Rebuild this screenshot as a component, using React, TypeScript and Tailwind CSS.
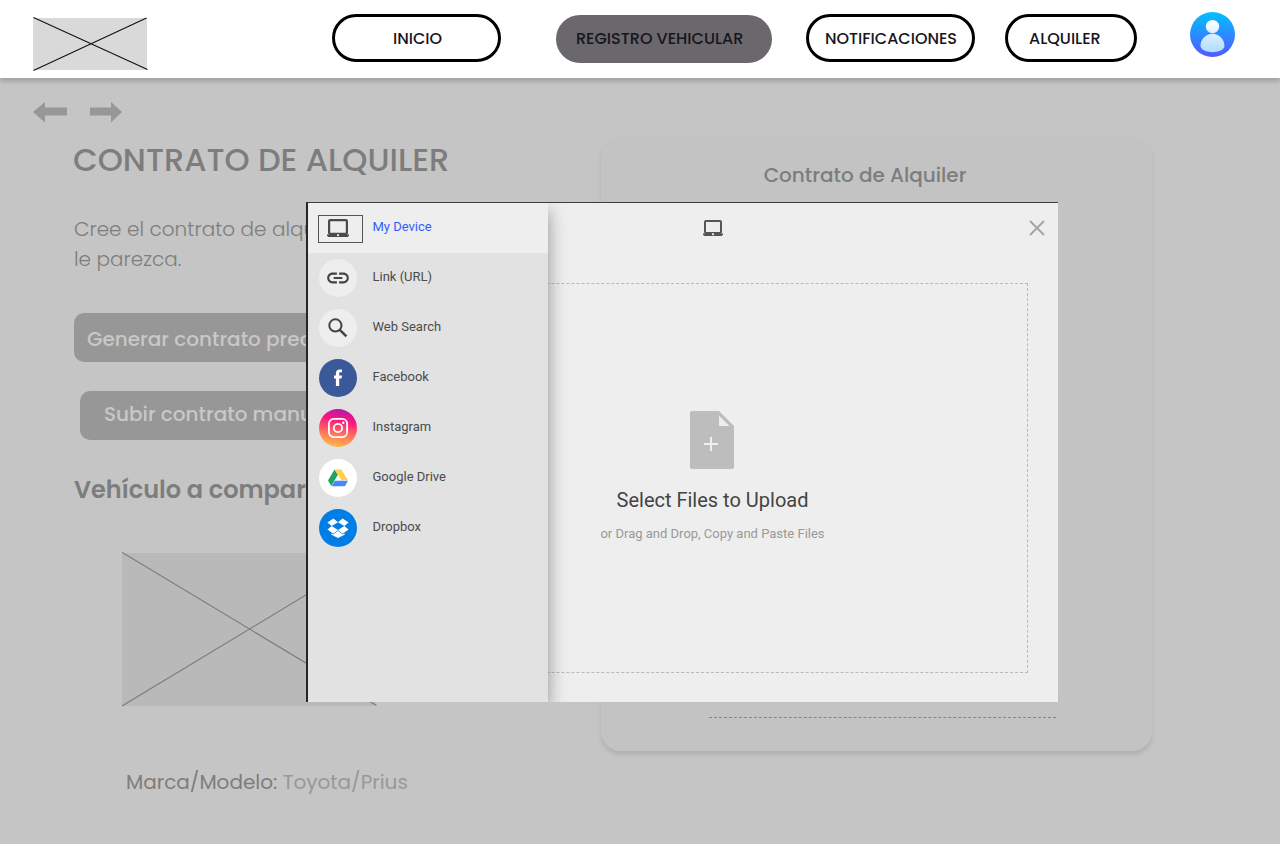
import type { ReactNode } from "react";

const LaptopIcon = ({ w, h, sw, color }: { w: number; h: number; sw: number; color: string }) => (
  <svg width={w} height={h} viewBox={`0 0 ${w} ${h}`} fill="none">
    <rect x={1 + sw / 2} y={sw / 2} width={w - 2 - sw} height={h - 2 - sw} rx="1" stroke={color} strokeWidth={sw} />
    <path d={`M0 ${h - 2.4}H${w}V${h - 1.5}L${w - 1.2} ${h}H1.2L0 ${h - 1.5}Z`} fill={color} />
    <rect x={w / 2 - 1} y={h - 2.7} width="2" height="1.8" fill="#eeeeee" />
  </svg>
);

const LinkIcon = () => (
  <svg width="26" height="26" viewBox="0 0 24 24" fill="#444444">
    <path d="M3.9 12c0-1.71 1.39-3.1 3.1-3.1h4V7H7c-2.76 0-5 2.24-5 5s2.24 5 5 5h4v-1.9H7c-1.71 0-3.1-1.39-3.1-3.1zM8 13h8v-2H8v2zm9-6h-4v1.9h4c1.71 0 3.1 1.39 3.1 3.1s-1.39 3.1-3.1 3.1h-4V17h4c2.76 0 5-2.24 5-5s-2.24-5-5-5z" />
  </svg>
);

const SearchIcon = () => (
  <svg width="20" height="20" viewBox="0 0 20 20" fill="none" stroke="#444444">
    <circle cx="7.4" cy="7.4" r="6.1" strokeWidth="2" />
    <path d="M11.8 11.8l6.6 6.6" strokeWidth="2.5" />
  </svg>
);

const FacebookIcon = () => (
  <svg width="8" height="17" viewBox="0 0 8 17" fill="#fff" className="-translate-y-px">
    <path d="M1.9 17V9.4H0V6.5h1.9V4.3C1.9 1.9 3.1.5 5.6.5H8v2.8H6.5c-1.1 0-1.3.5-1.3 1.3v1.9H8l-.4 2.9H5.2V17z" />
  </svg>
);

const InstagramIcon = () => (
  <svg width="20" height="20" viewBox="0 0 20 20" fill="none" stroke="#fff" strokeWidth="1.8">
    <rect x=".9" y=".9" width="18.2" height="18.2" rx="4.8" />
    <circle cx="10" cy="10" r="4.2" />
    <circle cx="15.3" cy="4.7" r="1.2" fill="#fff" stroke="none" />
  </svg>
);

const DriveIcon = () => (
  <svg width="20" height="18" viewBox="0 0 19 18" preserveAspectRatio="none">
    <path d="M6.2.4l3.2 5.4-6.3 11.3L0 11.6z" fill="#1da362" />
    <path d="M6.3.4h6.5L19 11.2h-6.3z" fill="#ffd04b" />
    <path d="M6.5 11.8H19L16 17.3H3.4z" fill="#4688f4" />
  </svg>
);

const DropboxIcon = () => (
  <svg width="22" height="20" viewBox="0 0 22 20" fill="#fff">
    <path d="M6.4.5L11 4.2 4.7 8 .4 4.6zM.4 11.6L4.7 8.1 11 12l-4.6 3.7zM11 12l6.3-3.9 4.3 3.5-6 4.1zM21.6 4.6L17.3 8 11 4.2 15.6.5zM11 12.8l4.6 3.8 2-1.3v1.5L11 20l-6.6-3.2v-1.5l2 1.3z" />
  </svg>
);

type Source = { label: string; icon: ReactNode; bg: string };

const sources: Source[] = [
  { label: "Link (URL)", icon: <LinkIcon />, bg: "bg-[#eeeeee]" },
  { label: "Web Search", icon: <SearchIcon />, bg: "bg-[#eeeeee]" },
  { label: "Facebook", icon: <FacebookIcon />, bg: "bg-[#3b5998]" },
  { label: "Instagram", icon: <InstagramIcon />, bg: "bg-[linear-gradient(10deg,#ffc83d_0%,#ff6f61_38%,#ff1580_68%,#a31aad_98%)]" },
  { label: "Google Drive", icon: <DriveIcon />, bg: "bg-white" },
  { label: "Dropbox", icon: <DropboxIcon />, bg: "bg-[#007ee5]" },
];

function Header() {
  return (
    <header className="relative flex h-[78px] items-start bg-white pl-[33px] text-[16px] font-medium text-[#17151c] shadow-[0_4px_4px_rgba(0,0,0,0.16)]">
      <svg className="mt-[17px] shrink-0" width="115" height="54" viewBox="0 0 115 54">
        <rect y="1" width="114" height="52" fill="#d9d9d9" />
        <path d="M.5 .5L114.5 52.5M.5 53.5L113.5 1" stroke="#111" strokeWidth="1.1" />
      </svg>
      <nav className="ml-[184px] flex items-start">
        <button className="mt-[14px] h-12 w-[169px] rounded-[24px] border-[3px] border-black pl-[58px] text-left leading-[43px] whitespace-nowrap">INICIO</button>
        <button className="mt-[15px] ml-[55px] h-12 w-[216px] rounded-[24px] bg-[#6a676d] pl-5 text-left leading-12 whitespace-nowrap">REGISTRO VEHICULAR</button>
        <button className="mt-[14px] ml-[34px] h-12 w-[169px] rounded-[24px] border-[3px] border-black pl-4 text-left leading-[43px] whitespace-nowrap">NOTIFICACIONES</button>
        <button className="mt-[14px] ml-[30px] h-12 w-[132px] rounded-[24px] border-[3px] border-black pl-[21px] text-left leading-[43px] whitespace-nowrap">ALQUILER</button>
      </nav>
      <svg className="mt-3 ml-[53px]" width="45" height="45" viewBox="0 0 45 45">
        <defs>
          <linearGradient id="avatar" x1="0" y1="0" x2="0" y2="1">
            <stop stopColor="#00c0ff" />
            <stop offset="1" stopColor="#5558ff" />
          </linearGradient>
          <linearGradient id="person" x1="0" y1="0" x2="0" y2="1">
            <stop stopColor="#ffffff" />
            <stop offset="1" stopColor="#addcff" />
          </linearGradient>
        </defs>
        <circle cx="22.5" cy="22.5" r="22.5" fill="url(#avatar)" />
        <path d="M29.2 14.6a6.7 6.7 0 1 1-13.4 0 6.7 6.7 0 0 1 13.4 0zM22.5 21.7c-6.8 0-12 6-12 11.9 0 4.7 6.4 6.6 12 6.6s12-1.9 12-6.6C34.5 27.7 29.3 21.7 22.5 21.7z" fill="url(#person)" />
      </svg>
    </header>
  );
}

function ContractPage() {
  return (
    <main className="flex h-[766px] items-start text-[#7d7d7d]">
      <section className="w-[600px] shrink-0 pt-6 pl-[33px]">
        <svg width="90" height="21" viewBox="0 0 90 21" fill="#979797">
          <path d="M0 10L12 0v5.5h22v8H12v7zM57 5.5h21V0l11 10-11 10.5v-7H57z" />
        </svg>
        <div className="pl-[41px]">
          <h1 className="mt-[13px] -ml-px h-12 text-[32px] leading-[48px] font-medium whitespace-nowrap">CONTRATO DE ALQUILER</h1>
          <p className="mt-[30px] text-[20px] leading-[30px] font-light">Cree el contrato de alquiler<br />le parezca.</p>
          <button className="mt-[39px] block h-[49px] w-[290px] overflow-hidden rounded-[10px] bg-[#979797] pt-[3px] pl-[13px] text-left text-[20px] font-medium whitespace-nowrap text-[#c8c8c8]">Generar contrato predet</button>
          <button className="mt-[29px] ml-1.5 block h-[49px] w-[278px] rounded-[10px] bg-[#979797] pb-[3px] pl-6 text-left text-[20px] font-medium whitespace-nowrap text-[#c8c8c8]">Subir contrato manual</button>
          <h2 className="mt-[32px] h-9 text-[24px] leading-9 font-semibold">Vehículo a comparar</h2>
          <svg className="mt-[44px] ml-12 block" width="255" height="155" viewBox="0 0 255 155">
            <rect y="1" width="254" height="153" fill="#b9b9b9" />
            <path d="M0 .3L254.5 153.5M0 154L254.5 .3" stroke="#7d7d7d" strokeWidth="1.1" />
          </svg>
          <p className="mt-[60px] ml-[52px] text-[20px] leading-[30px] whitespace-nowrap">Marca/Modelo: <span className="text-[#989898]">Toyota/Prius</span></p>
        </div>
      </section>
      <section className="mt-[58px] ml-px flex h-[615px] w-[551px] flex-col rounded-[20px] bg-[#c3c3c3] shadow-[0_4px_4px_rgba(0,0,0,0.1)]">
        <h2 className="mt-6 mr-[23px] text-center text-[20px] leading-[30px] font-medium">Contrato de Alquiler</h2>
        <div className="mt-auto mb-[33px] ml-[108px] w-[347px] border-t border-dashed border-[#858585]" />
      </section>
    </main>
  );
}

function UploadDialog() {
  return (
    <div className="absolute top-[202px] left-[306px] flex h-[500px] w-[752px] border-t border-l-2 border-t-[#3c3e40] border-l-[#23272b] bg-[#eeeeee] font-['Roboto',sans-serif]">
      <aside className="relative z-10 w-60 shrink-0 bg-[#e2e2e2] text-[13px] text-[#4b4b4b] shadow-[0_8px_17px_rgba(0,0,0,0.4)] [clip-path:inset(0_-24px_0_0)]">
        <div className="flex h-[50px] items-center bg-[#eeeeee] pl-[10px]">
          <div className="mt-[2px] flex h-7 w-[45px] items-center justify-start border border-[#555] pb-[2px] pl-[8px]">
            <LaptopIcon w={22} h={18} sw={2.2} color="#4a4a4a" />
          </div>
          <span className="ml-[9.5px] pb-[3px] text-[#315efb]">My Device</span>
        </div>
        {sources.map((s) => (
          <div key={s.label} className="flex h-[50px] items-center pl-[11px]">
            <div className={`flex size-[38px] shrink-0 items-center justify-center rounded-full ${s.bg}`}>{s.icon}</div>
            <span className="ml-[15.5px] pb-[3px]">{s.label}</span>
          </div>
        ))}
      </aside>
      <div className="flex flex-1 flex-col">
        <div className="flex h-20 items-start justify-between pt-[17px] pr-[13px] pl-[155px]">
          <LaptopIcon w={20} h={16} sw={2} color="#555555" />
          <svg className="-mt-[0.5px]" width="16" height="16" viewBox="0 0 16 16" stroke="#a5a5a5" strokeWidth="2">
            <path d="M1 1l14 14M15 1L1 15" />
          </svg>
        </div>
        <div className="mr-[30px] -ml-[151px] flex h-[390px] flex-col items-center border border-dashed border-[#b9b9b9] pt-[127px]">
          <svg className="mr-px" width="44" height="58" viewBox="0 0 44 58">
            <path d="M2 0h27l15 15v41a2 2 0 0 1-2 2H2a2 2 0 0 1-2-2V2a2 2 0 0 1 2-2z" fill="#bdbdbd" />
            <path d="M29 4.5v10.5h10.5z" fill="#eeeeee" />
            <path d="M14 33h14M21 26v14" stroke="#eeeeee" strokeWidth="2" />
          </svg>
          <div className="mt-4 text-[20px] leading-[30px] text-[#444444]">Select Files to Upload</div>
          <div className="mt-[9px] text-[13px] leading-5 text-[#999999]">or Drag and Drop, Copy and Paste Files</div>
        </div>
      </div>
    </div>
  );
}

export default function App() {
  return (
    <div className="relative h-[844px] w-[1280px] overflow-hidden bg-[#c5c5c5] font-['Poppins','Inter',sans-serif]">
      <Header />
      <ContractPage />
      <UploadDialog />
    </div>
  );
}
